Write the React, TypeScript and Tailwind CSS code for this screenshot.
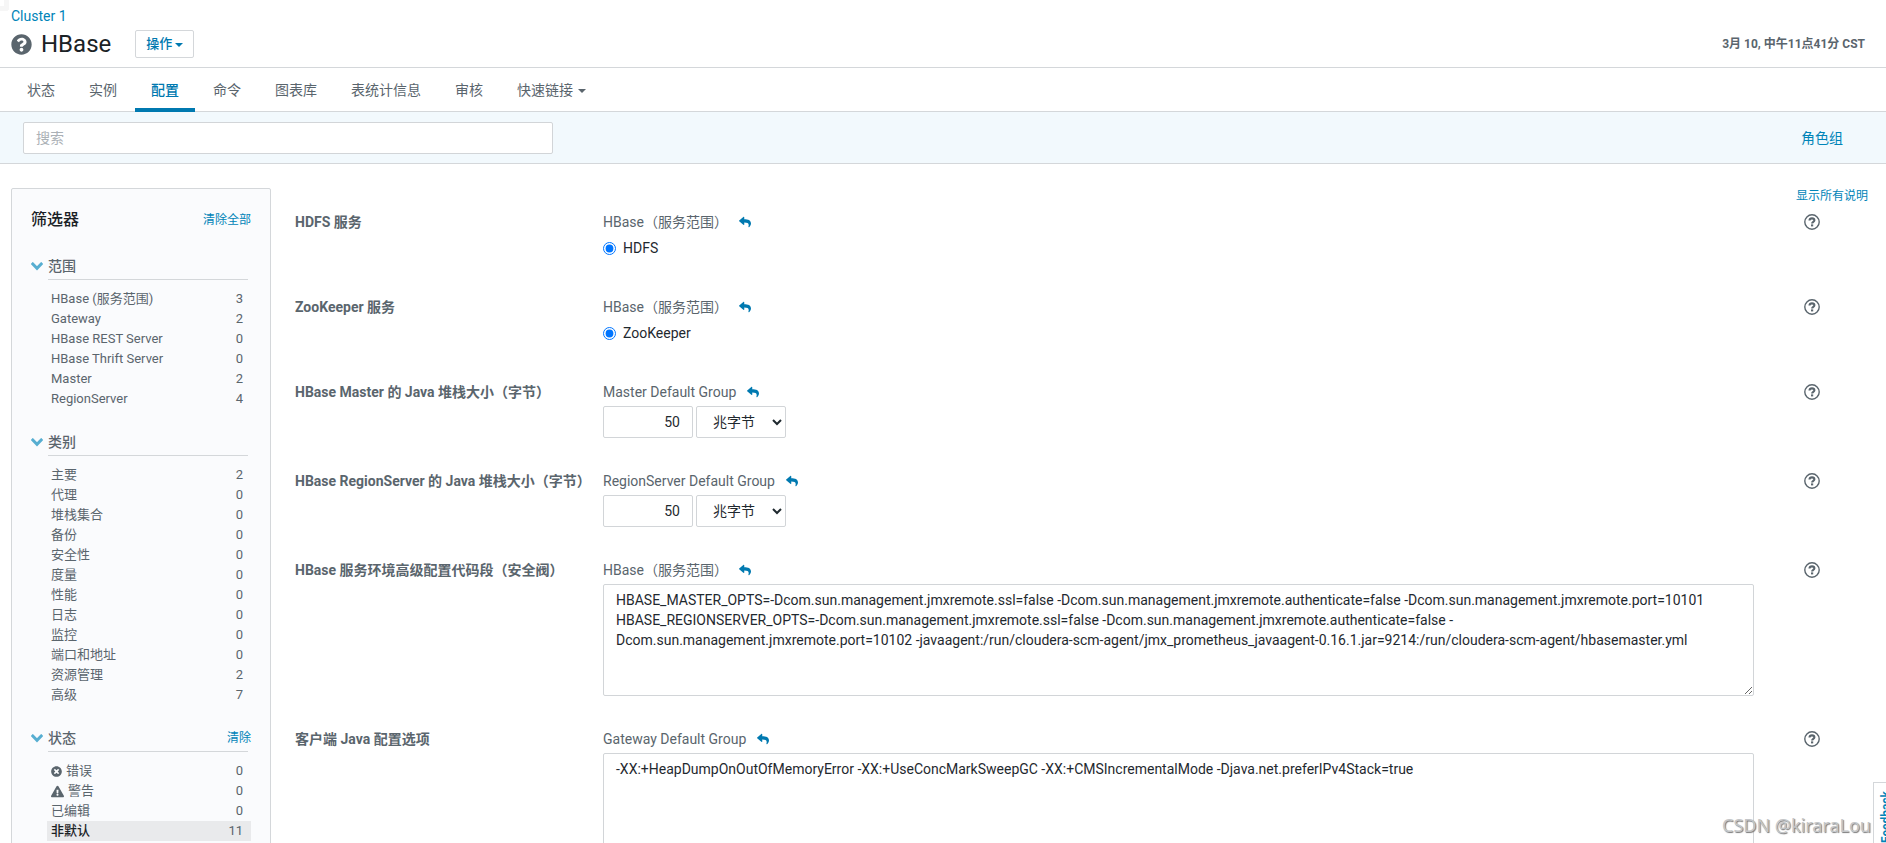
import React from "react";
import { FaReply, FaQuestionCircle, FaTimesCircle, FaExclamationTriangle } from "react-icons/fa";

type Item = { name: string; count: number; icon?: "error" | "warning"; selected?: boolean };
type Group = { title: string; clear?: boolean; items: Item[] };
type Config = {
  id: string;
  label: string;
  scope: string;
  kind: "radio" | "size" | "text";
  value: string;
};

const TABS = ["状态", "实例", "配置", "命令", "图表库", "表统计信息", "审核", "快速链接"];

const GROUPS: Group[] = [
  {
    title: "范围",
    items: [
      { name: "HBase (服务范围)", count: 3 },
      { name: "Gateway", count: 2 },
      { name: "HBase REST Server", count: 0 },
      { name: "HBase Thrift Server", count: 0 },
      { name: "Master", count: 2 },
      { name: "RegionServer", count: 4 },
    ],
  },
  {
    title: "类别",
    items: [
      { name: "主要", count: 2 },
      { name: "代理", count: 0 },
      { name: "堆栈集合", count: 0 },
      { name: "备份", count: 0 },
      { name: "安全性", count: 0 },
      { name: "度量", count: 0 },
      { name: "性能", count: 0 },
      { name: "日志", count: 0 },
      { name: "监控", count: 0 },
      { name: "端口和地址", count: 0 },
      { name: "资源管理", count: 2 },
      { name: "高级", count: 7 },
    ],
  },
  {
    title: "状态",
    clear: true,
    items: [
      { name: "错误", count: 0, icon: "error" },
      { name: "警告", count: 0, icon: "warning" },
      { name: "已编辑", count: 0 },
      { name: "非默认", count: 11, selected: true },
    ],
  },
];

const CONFIGS: Config[] = [
  { id: "hdfs", label: "HDFS 服务", scope: "HBase（服务范围）", kind: "radio", value: "HDFS" },
  { id: "zookeeper", label: "ZooKeeper 服务", scope: "HBase（服务范围）", kind: "radio", value: "ZooKeeper" },
  { id: "master-heap", label: "HBase Master 的 Java 堆栈大小（字节）", scope: "Master Default Group", kind: "size", value: "50" },
  { id: "region-heap", label: "HBase RegionServer 的 Java 堆栈大小（字节）", scope: "RegionServer Default Group", kind: "size", value: "50" },
  {
    id: "env-safety-valve",
    label: "HBase 服务环境高级配置代码段（安全阀）",
    scope: "HBase（服务范围）",
    kind: "text",
    value:
      "HBASE_MASTER_OPTS=-Dcom.sun.management.jmxremote.ssl=false -Dcom.sun.management.jmxremote.authenticate=false -Dcom.sun.management.jmxremote.port=10101\nHBASE_REGIONSERVER_OPTS=-Dcom.sun.management.jmxremote.ssl=false -Dcom.sun.management.jmxremote.authenticate=false -Dcom.sun.management.jmxremote.port=10102 -javaagent:/run/cloudera-scm-agent/jmx_prometheus_javaagent-0.16.1.jar=9214:/run/cloudera-scm-agent/hbasemaster.yml",
  },
  {
    id: "client-java-opts",
    label: "客户端 Java 配置选项",
    scope: "Gateway Default Group",
    kind: "text",
    value:
      "-XX:+HeapDumpOnOutOfMemoryError -XX:+UseConcMarkSweepGC -XX:+CMSIncrementalMode -Djava.net.preferIPv4Stack=true",
  },
];

function Chevron() {
  return (
    <svg viewBox="0 0 12 9" className="h-[9px] w-3 shrink-0" aria-hidden="true">
      <path d="M1.8 2 L6 6.3 L10.2 2" fill="none" stroke="#57aed1" strokeWidth="3" strokeLinecap="square" strokeLinejoin="miter" />
    </svg>
  );
}

function Caret() {
  return (
    <svg viewBox="0 0 8 4" className="mt-0.5 h-1 w-2 shrink-0" aria-hidden="true">
      <path d="M0 0 H8 L4 4 Z" fill="currentColor" />
    </svg>
  );
}

function HelpIcon() {
  return (
    <svg viewBox="0 0 16 16" className="size-4" aria-hidden="true">
      <circle cx="8" cy="8" r="7.2" fill="none" stroke="#5a656d" strokeWidth="1.4" />
      <path d="M5.5 6.5 C5.6 4.9 6.7 4.4 8 4.4 C9.4 4.4 10.4 5.1 10.4 6.3 C10.4 7.8 8.1 7.8 8.1 9.5" fill="none" stroke="#5a656d" strokeWidth="2.1" />
      <rect x="7" y="10.4" width="2.2" height="2" fill="#5a656d" />
    </svg>
  );
}

function FilterGroup({ group }: { group: Group }) {
  return (
    <section className="mt-[19px]">
      <div className="flex items-center">
        <button type="button" className="flex items-center gap-[5px] pt-1 pb-[3px]">
          <Chevron />
          <h3 className="text-sm leading-5 font-medium">{group.title}</h3>
        </button>
        {group.clear && (
          <a href="#clear" className="ml-auto text-xs text-[#0084b8]">清除</a>
        )}
      </div>
      <ul className="mr-[3px] ml-[17px] border-t border-[#d4d7da] pt-[9px] text-[13px] leading-5">
        {group.items.map((item) => (
          <li
            key={item.name}
            className={
              item.selected
                ? "-mr-[3px] -ml-px flex items-center bg-[#e9eaec] pr-2 pl-1"
                : "-mr-[3px] -ml-px flex items-center pr-2 pl-1"
            }
          >
            {item.icon === "error" && <FaTimesCircle className="mr-1 size-[11px]" />}
            {item.icon === "warning" && <FaExclamationTriangle className="mr-1 size-[13px]" />}
            <a href="#filter" className={item.selected ? "font-medium text-[#1b2226]" : ""}>{item.name}</a>
            <span className="ml-auto">{item.count}</span>
          </li>
        ))}
      </ul>
    </section>
  );
}

const FIELD = "rounded-[2px] border border-[#d2d5d8] bg-white text-[#1f292f]";

function Control({ config }: { config: Config }) {
  if (config.kind === "radio") {
    return (
      <div className="flex h-7 items-start">
        <label className="flex h-6 items-center gap-[7px] text-[#1f292f]">
          <input type="radio" name={config.id} defaultChecked className="size-[13px] accent-[#0075ff]" />
          {config.value}
        </label>
      </div>
    );
  }
  if (config.kind === "size") {
    return (
      <div className="flex gap-[3px]">
        <input id={config.id} type="text" defaultValue={config.value} className={`${FIELD} h-8 w-[90px] px-3 text-right`} />
        <select aria-label={`${config.label} 单位`} className={`${FIELD} h-8 w-[90px] pl-3`}>
          <option>兆字节</option>
        </select>
      </div>
    );
  }
  return (
    <textarea id={config.id} defaultValue={config.value} className={`${FIELD} block h-28 w-full px-3 py-[5px] leading-5`} />
  );
}

function ConfigRow({ config }: { config: Config }) {
  return (
    <div className="flex pb-[33px] leading-5">
      <label htmlFor={config.id} className="w-[308px] shrink-0 font-bold whitespace-nowrap">
        {config.label}
      </label>
      <div className="min-w-0 grow">
        <div className="mb-1 flex items-center gap-[11px]">
          <span>{config.scope}</span>
          <button type="button" aria-label="重置" className="text-[#0079b0]">
            <FaReply className="size-3" />
          </button>
        </div>
        <Control config={config} />
      </div>
      <div className="flex w-[132px] shrink-0 pl-[50px]">
        <button type="button" aria-label="说明" className="h-5">
          <HelpIcon />
        </button>
      </div>
    </div>
  );
}

export default function App() {
  return (
    <div className="relative h-screen overflow-hidden bg-white font-[Roboto,'Noto_Sans_CJK_SC',sans-serif] text-sm text-[#5a656d]">
      <div className="absolute top-0 left-0 h-[11px] w-[9px] rounded-br-[3px] border-r-[5px] border-b-[5px] border-[#f6f6f6]" />
      <header className="border-b border-[#d4d7da] px-[11px] pt-1.5 pb-2">
        <a href="#cluster" className="relative block w-fit leading-5 text-[#0084b8]">Cluster 1</a>
        <div className="mt-1 flex items-center pb-px">
          <FaQuestionCircle className="size-[21px]" />
          <h1 className="ml-[9px] text-2xl leading-7 text-[#1b2226]">HBase</h1>
          <button type="button" className="ml-6 flex h-7 items-center gap-[3px] rounded-[2px] border border-[#d4d7da] px-[10px] text-[13px] font-medium text-[#0079b0]">
            操作
            <Caret />
          </button>
          <time className="mr-2.5 ml-auto text-xs leading-5 font-bold">3月 10, 中午11点41分 CST</time>
        </div>
      </header>

      <nav className="flex gap-0.5 border-b border-[#d4d7da] px-[11px]">
        {TABS.map((tab) => (
          <a
            key={tab}
            href="#tab"
            className={
              tab === "配置"
                ? "-mb-px flex h-11 items-center border-b-4 border-[#0079b0] px-4 pt-1 font-medium text-[#0079b0]"
                : "flex h-[43px] items-center gap-[5px] px-4"
            }
          >
            {tab}
            {tab === "快速链接" && <Caret />}
          </a>
        ))}
      </nav>

      <div className="flex items-center border-b border-[#d4d7da] bg-[#f2f9fd] pt-[10px] pr-[43px] pb-[9px] pl-[23px]">
        <input
          type="search"
          aria-label="搜索"
          placeholder="搜索"
          className={`${FIELD} h-8 w-[530px] px-3 placeholder:text-[#abb1b6]`}
        />
        <a href="#roles" className="ml-auto text-[#0084b8]">角色组</a>
      </div>

      <div className="flex items-start pl-[11px]">
        <aside className="mt-6 w-[260px] shrink-0 rounded-[2px] border border-[#d4d7da] bg-[#fafbfd] px-[19px] pt-[19px] pb-6">
          <div className="flex items-center pb-px">
            <h2 className="text-base leading-6 font-medium text-[#1b2226]">筛选器</h2>
            <a href="#clear-all" className="ml-auto text-xs text-[#0084b8]">清除全部</a>
          </div>
          {GROUPS.map((group) => (
            <FilterGroup key={group.title} group={group} />
          ))}
        </aside>
        <main className="min-w-0 grow pt-[22px] pl-6">
          <div className="flex justify-end pr-[18px]">
            <a href="#descriptions" className="text-xs leading-5 text-[#0084b8]">显示所有说明</a>
          </div>
          <div className="mt-1.5">
            {CONFIGS.map((config) => (
              <ConfigRow key={config.id} config={config} />
            ))}
          </div>
        </main>
      </div>

      <button
        type="button"
        className="absolute right-0 bottom-0 h-[61px] w-[13px] overflow-hidden border-t border-l border-[#d4d7da] bg-white text-[#0084b8]"
      >
        <span className="absolute top-2 left-1 rotate-180 text-xs leading-4 font-bold [writing-mode:vertical-rl]">Feedback</span>
      </button>
      <div className="pointer-events-none absolute right-[15px] bottom-1 font-['Noto_Sans',sans-serif] text-lg leading-7 text-[#c4c6c8] [text-shadow:1px_1px_1px_#777]">
        CSDN @kiraraLou
      </div>
    </div>
  );
}
